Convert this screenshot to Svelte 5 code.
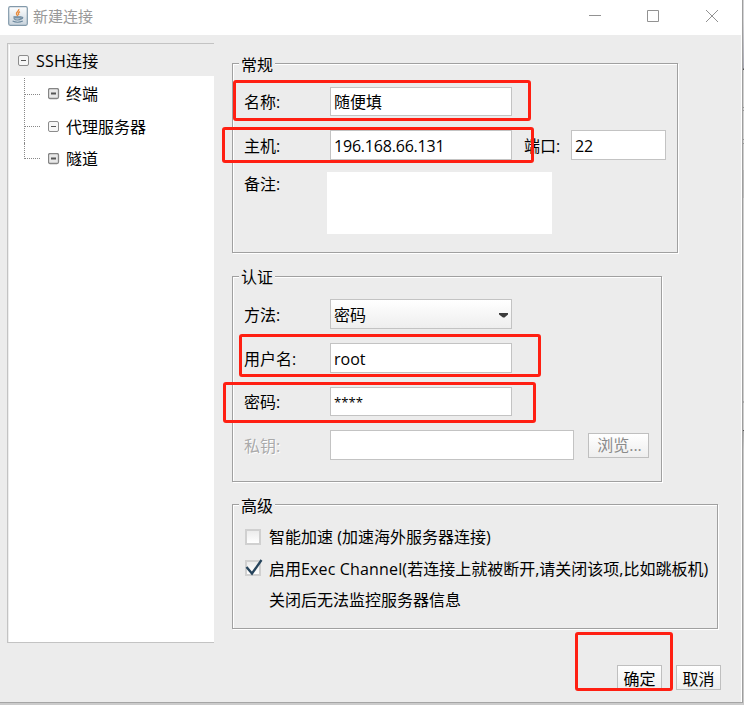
<script>
  const branches = [
    { label: '终端', filled: true },
    { label: '代理服务器', filled: false },
    { label: '隧道', filled: true }
  ];
  const marks = ['m-name', 'm-host', 'm-user', 'm-pass', 'm-ok'];
</script>

{#snippet toggle(filled)}
  <svg class="toggle" width="12" height="12" viewBox="0 0 12 12">
    <rect x=".5" y=".5" width="10" height="10" rx="1.5" fill={filled ? '#e8e8e8' : '#f6f6f6'} stroke={filled ? '#858585' : '#8c8c8c'} stroke-width={filled ? 1.3 : 1} />
    <path d="M3 5.500H8" stroke="#555" stroke-width={filled ? 2 : 1} />
  </svg>
{/snippet}

<div class="screen">
  <div class="window">
    <header>
      <svg class="java" width="20" height="20" viewBox="0 0 20 20">
        <defs>
          <linearGradient id="face" x1="0" y1="0" x2="0" y2="1">
            <stop offset="0" stop-color="#fff" /><stop offset="1" stop-color="#c8d3dc" />
          </linearGradient>
        </defs>
        <rect x=".7" y=".7" width="18.6" height="18.6" rx="1.5" fill="url(#face)" stroke="#8299aa" stroke-width="1.2" />
        <path d="M10.8 3C11.5 5 7.5 6 8.5 8.2L9.8 10M12 5.6C9.8 6.8 10.2 8 11 9" fill="none" stroke="#e98a3a" stroke-width="1.3" />
        <path d="M6 10.7H13V12.5Q12.5 14 9.6 14Q6.8 14 6.2 12.8ZM13 11Q15.5 10.8 14.5 12.4L12.8 13.3M4.6 15Q9.5 17.4 14.8 15" fill="none" stroke="#6b879d" stroke-width="1.1" />
        <path d="M6.5 11.8H12.5" stroke="#6b879d" stroke-width="1.3" />
      </svg>
      <span class="title">新建连接</span>
      <svg class="controls" width="131" height="14" viewBox="0 0 131 14">
        <path d="M0 6.5H12M58.500 1.500H69.500V12.500H58.500ZM117 1L129 13M129 1L117 13" fill="none" stroke="#929292" />
      </svg>
    </header>
    <main>
      <nav>
        <div class="root">{@render toggle(false)}<span>SSH连接</span></div>
        <ul>
          {#each branches as b}
            <li><i></i>{@render toggle(b.filled)}<span>{b.label}</span></li>
          {/each}
        </ul>
      </nav>
      <div class="form">
        <section class="general">
          <h2>常规</h2>
          <div class="row r-name"><label for="name">名称:</label><div class="field" id="name">随便填</div></div>
          <div class="row r-host low"><label for="host">主机:</label><div class="field num" id="host">196.168.66.131</div><label class="port-label" for="port">端口:</label><div class="field port num" id="port">22</div></div>
          <div class="row r-note"><label for="note">备注:</label><div class="note" id="note"></div></div>
        </section>
        <section class="auth">
          <h2>认证</h2>
          <div class="row r-method low"><label for="method">方法:</label><div class="field select" id="method">密码<svg width="9" height="5" viewBox="0 0 9 5"><path d="M0 0H9V1.500L5.500 4.500H4L0 1.500Z" fill="#3b3b3b" /></svg></div></div>
          <div class="row r-user low"><label for="user">用户名:</label><div class="field" id="user"><span class="latin">root</span></div></div>
          <div class="row r-pass"><label for="pass">密码:</label><div class="field stars" id="pass">****</div></div>
          <div class="row r-key low"><label class="off" for="key">私钥:</label><div class="field key" id="key"></div><button class="browse">浏览...</button></div>
        </section>
        <section class="advanced">
          <h2>高级</h2>
          <div class="check c1"><b class="box"></b><span>智能加速 (加速海外服务器连接)</span></div>
          <div class="check c2"><b class="box"><svg width="20" height="18" viewBox="0 0 20 18"><path d="M1.500 8L7 14.500L16.500 1" fill="none" stroke="#26445c" stroke-width="2.300" /></svg></b><span>启用<span class="exec">Exec Channel(</span>若连接上就被断开,请关闭该项,比如跳板机)</span></div>
          <div class="check c3"><span>关闭后无法监控服务器信息</span></div>
        </section>
        <footer><button>确定</button><button>取消</button></footer>
      </div>
    </main>
  </div>
  <aside></aside>
  {#each marks as m}<div class="mark {m}"></div>{/each}
</div>

<style>
  :global(body) { margin: 0; }
  .screen { position: relative; width: 744px; height: 705px; overflow: hidden; display: flex; background: #cbcbcb; font: 16px/22px "Open Sans", "Noto Sans CJK SC", sans-serif; color: #000; }
  .screen * { box-sizing: border-box; }
  .window { width: 743px; height: 703px; background: #ececec; border-right: 1px solid #9e9e9e; border-bottom: 1px solid #a5a5a5; display: flex; flex-direction: column; }
  aside { width: 1px; height: 705px; background: linear-gradient(#d2d2d4 0 20px, #a9a9b4 68px, #555 69px 70px, #d0d0d0 70px 107px, #999 107px 108px, #d0d0d0 108px 110px, #999 110px 111px, #d0d0d0 111px 139px, #999 139px 140px, #d0d0d0 140px 143px, #999 143px 144px, #cecece 144px 170px, #bcbcbc 170px 198px, #cecece 198px 401px, #aaa 401px 403px, #cecece 403px 430px, #555 430px 431px, #aaa 431px, #c8c8c8 450px); }
  header { height: 35px; background: #fff; display: flex; align-items: flex-start; padding: 6px 0 0 8px; flex: none; }
  .title { color: #999; font-size: 15px; line-height: 20px; margin-left: 5px; flex: 1; }
  .controls { margin: 3px 22px 0 0; }
  main { display: flex; flex: 1; border-right: 1px solid #fff; }
  nav { margin: 8px 0 0 7px; width: 207px; height: 600px; background: #fff; border: 1px solid #c3c3c3; border-right: 0; box-shadow: inset 1px 1px #eee; padding-left: 2px; }
  .root { height: 32px; background: #ececec; display: flex; align-items: center; padding: 2px 0 0 8px; letter-spacing: .2px; }
  .root span { margin-left: 6px; }
  .toggle { display: block; flex: none; }
  ul { list-style: none; padding: 2px 0 0; margin: 0 0 0 14px; }
  li { height: 32.4px; display: flex; align-items: center; position: relative; }
  li i { width: 16px; border-top: 1px dotted #888; margin-right: 8px; }
  li::before { content: ''; position: absolute; left: 0; top: 0; height: 33px; border-left: 1px dotted #888; }
  li:last-child::before { height: 16px; }
  li span { margin-left: 6px; }
  .form { margin-left: 18px; display: flex; flex-direction: column; align-items: flex-start; width: 509px; }
  section { position: relative; border: 1px solid #a0a0a0; box-shadow: 1px 1px #fff, inset 1px 1px #fff; padding-left: 11px; }
  h2 { position: absolute; left: 6px; top: -10px; margin: 0; padding: 0 2px; font: inherit; background: #ececec; }
  .auth h2 { top: -11px; }
  .general { margin-top: 28px; width: 446px; height: 190px; padding-top: 23px; }
  .auth { margin-top: 23px; width: 430px; height: 206px; padding-top: 22px; }
  .advanced { margin-top: 22px; width: 486px; height: 125px; padding-top: 20px; }
  .row { display: flex; align-items: center; }
  .row > label:first-child { width: 86px; }
  .low label, .low .field { padding-top: 2px; }
  .field { width: 182px; height: 100%; background: #fff; border: 1px solid #c3c3c3; padding-left: 3px; display: flex; align-items: center; }
  .num { letter-spacing: -.2px; }
  .stars { font-size: 13.200px; }
  .exec { letter-spacing: .15px; }
  .r-name { height: 29px; margin-bottom: 14px; }
  .r-host { height: 30px; margin-bottom: 12px; }
  .r-note { height: 62px; align-items: flex-start; }
  .port-label { margin-left: 12px; width: 47px; }
  .port { width: 95px; }
  .note { width: 225px; height: 62px; background: #fff; margin-left: -3px; }
  .r-note label { line-height: 24px; }
  .r-method, .r-user, .r-key { height: 30px; margin-bottom: 14px; }
  .r-pass { height: 29px; margin-bottom: 14px; }
  .select { background: linear-gradient(#fff, #eee); justify-content: space-between; padding-right: 3px; }
  .key { width: 244px; }
  .off { color: #aaa; text-shadow: 1px 1px #fff; }
  button { font: inherit; width: 45px; height: 25px; padding: 2px 0 0; border: 1px solid #bfbfbf; background: linear-gradient(#fff, #eee); color: #000; line-height: 22px; white-space: nowrap; }
  .browse { width: 61px; margin-left: 14px; padding: 0 0 0 2px; color: #8a8a8a; }
  .check { display: flex; height: 31.500px; padding-left: 1px; white-space: nowrap; }
  .check > span { margin-top: 1px; }
  .box { position: relative; width: 16px; height: 16px; margin: 4px 8px 0 0; border: 2px solid #d0d0d0; background: linear-gradient(#ececec, #fff); flex: none; }
  .box svg { position: absolute; left: -2px; top: -3px; }
  .c2 .box { margin-top: 3px; }
  .c3 { padding-left: 25px; }
  footer { display: flex; gap: 14px; margin: 36px 0 0 385px; }
  .mark { position: absolute; border: 3px solid #ff1f12; border-radius: 3px; pointer-events: none; }
  .m-name { left: 233px; top: 80px; width: 298px; height: 41px; }
  .m-host { left: 222px; top: 127px; width: 312px; height: 36px; }
  .m-user { left: 239px; top: 334px; width: 302px; height: 43px; }
  .m-pass { left: 223px; top: 382px; width: 313px; height: 41px; }
  .m-ok { left: 575px; top: 632px; width: 98px; height: 59px; }
</style>
